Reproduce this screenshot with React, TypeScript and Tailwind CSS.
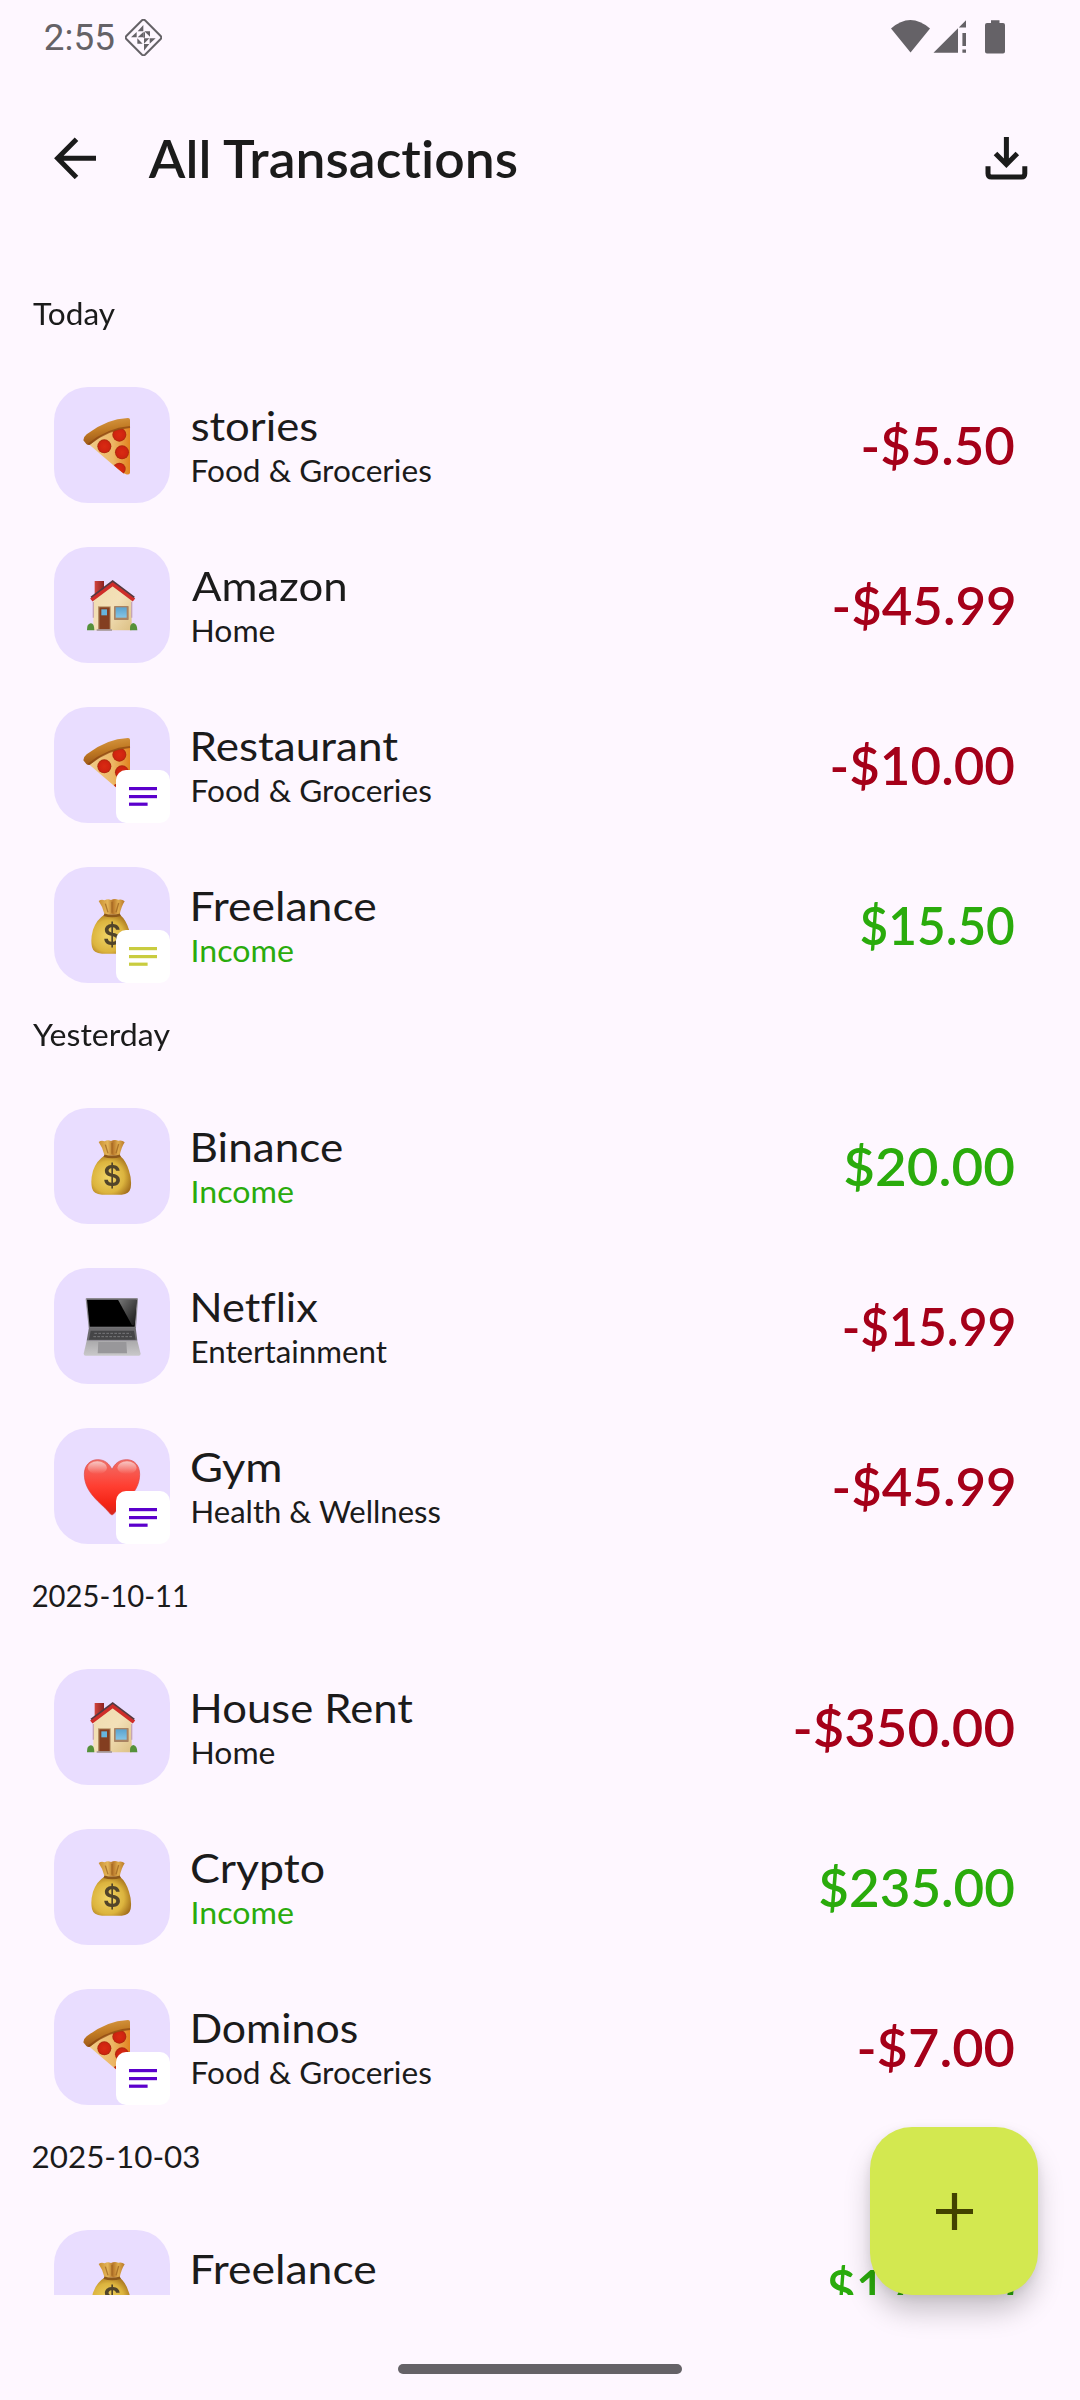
import React from "react";

type Kind = "pizza" | "house" | "bag" | "laptop" | "heart";
type Item = {
  icon: Kind;
  name: string;
  nameW: number;
  category: string;
  amount: string;
  amountW: number;
  note?: boolean;
};
type Group = { label: string; width: number; items: Item[] };

const categoryWidths: Record<string, number> = {
  "Food & Groceries": 238,
  Home: 81.5,
  Income: 100,
  Entertainment: 194,
  "Health & Wellness": 247.5,
};

const groups: Group[] = [
  {
    label: "Today",
    width: 82,
    items: [
      { icon: "pizza", name: "stories", nameW: 125, category: "Food & Groceries", amount: "-$5.50", amountW: 151 },
      { icon: "house", name: "Amazon", nameW: 153, category: "Home", amount: "-$45.99", amountW: 180 },
      { icon: "pizza", name: "Restaurant", nameW: 205, category: "Food & Groceries", amount: "-$10.00", amountW: 182, note: true },
      { icon: "bag", name: "Freelance", nameW: 182.5, category: "Income", amount: "$15.50", amountW: 153, note: true },
    ],
  },
  {
    label: "Yesterday",
    width: 137,
    items: [
      { icon: "bag", name: "Binance", nameW: 149, category: "Income", amount: "$20.00", amountW: 169 },
      { icon: "laptop", name: "Netflix", nameW: 125, category: "Entertainment", amount: "-$15.99", amountW: 170 },
      { icon: "heart", name: "Gym", nameW: 88, category: "Health & Wellness", amount: "-$45.99", amountW: 180, note: true },
    ],
  },
  {
    label: "2025-10-11",
    width: 154,
    items: [
      { icon: "house", name: "House Rent", nameW: 220, category: "Home", amount: "-$350.00", amountW: 219 },
      { icon: "bag", name: "Crypto", nameW: 131.5, category: "Income", amount: "$235.00", amountW: 194 },
      { icon: "pizza", name: "Dominos", nameW: 164, category: "Food & Groceries", amount: "-$7.00", amountW: 155, note: true },
    ],
  },
  {
    label: "2025-10-03",
    width: 166,
    items: [{ icon: "bag", name: "Freelance", nameW: 182.5, category: "Income", amount: "$175.00", amountW: 186 }],
  },
];

const ctx = document.createElement("canvas").getContext("2d")!;
/* A non-zero spacing keeps ligatures out of the measurement. */
(ctx as any).letterSpacing = "0.01px";

/* One line of text whose ink starts at the box's left edge and is stretched to exactly `width` pixels. */
function Fit({
  text,
  width,
  size,
  weight = 400,
  family = "Lato",
  className = "",
}: {
  text: string;
  width: number;
  size: number;
  weight?: number;
  family?: string;
  className?: string;
}) {
  ctx.font = `${weight} ${size * 10}px ${family}, sans-serif`;
  const m = ctx.measureText(text);
  const bearing = m.actualBoundingBoxLeft / 10;
  const ink = bearing + m.actualBoundingBoxRight / 10;
  const scale = width / ink;
  return (
    <div className={`whitespace-nowrap ${className}`} style={{ width }}>
      <span
        className="block origin-left [font-variant-ligatures:none]"
        style={{
          fontFamily: `${family}, sans-serif`,
          fontSize: size,
          fontWeight: weight,
          transform: `translateX(${bearing * scale}px) scaleX(${scale})`,
        }}
      >
        {text}
      </span>
    </div>
  );
}

function Pizza() {
  return (
    <>
      <defs>
        <linearGradient id="cheese" x1="0" x2="1" y1="0" y2="0">
          <stop offset="0" stopColor="#efcd8c" />
          <stop offset="0.6" stopColor="#ecb765" />
          <stop offset="1" stopColor="#e2831f" />
        </linearGradient>
        <linearGradient id="crust" x1="0" x2="0.25" y1="0" y2="1">
          <stop offset="0" stopColor="#dca04a" />
          <stop offset="0.5" stopColor="#c27c25" />
          <stop offset="1" stopColor="#9a5516" />
        </linearGradient>
        <radialGradient id="pepperoni">
          <stop offset="0" stopColor="#d92b12" />
          <stop offset="0.75" stopColor="#cf2310" />
          <stop offset="1" stopColor="#a92a0c" />
        </radialGradient>
        <clipPath id="slice">
          <path d="M100 168 Q160 122 228 112 V262 Q216 268 204 256 Z" />
        </clipPath>
      </defs>
      <path d="M100 168 Q160 122 228 112 V258 Q226 264 216 262 Q200 254 180 236 Z" fill="url(#cheese)" />
      <g clipPath="url(#slice)" fill="url(#pepperoni)">
        <circle cx="196" cy="143" r="21" />
        <circle cx="151" cy="178" r="21" />
        <circle cx="204" cy="196" r="21" />
        <circle cx="196" cy="246" r="19" />
      </g>
      <path d="M88 160 Q88 150 98 142 Q158 95 222 93 Q228 93 228 98 V122 Q160 126 112 170 Q104 178 97 171 Z" fill="url(#crust)" />
      <path d="M104 172 Q160 126 228 120" stroke="#8c4510" strokeWidth="6" fill="none" opacity="0.7" />
    </>
  );
}

function House() {
  return (
    <>
      <defs>
        <linearGradient id="wall" x1="0" x2="1" y1="0" y2="1">
          <stop offset="0" stopColor="#efdcae" />
          <stop offset="0.5" stopColor="#f3e0b8" />
          <stop offset="1" stopColor="#dcc084" />
        </linearGradient>
        <linearGradient id="chimney" x1="0" x2="1">
          <stop offset="0" stopColor="#d2453d" />
          <stop offset="1" stopColor="#8a2220" />
        </linearGradient>
        <linearGradient id="glass" x1="0" x2="0" y1="0" y2="1">
          <stop offset="0" stopColor="#5aa3cf" />
          <stop offset="1" stopColor="#85c5e6" />
        </linearGradient>
      </defs>
      <rect x="122" y="102" width="28" height="48" fill="url(#chimney)" />
      <path d="M118 155 L176 112 L233 155 V250 H118 Z" fill="url(#wall)" />
      <path d="M118 165 V212 M233 165 V212" stroke="#c6a6b4" strokeWidth="4" />
      <path d="M112 159 L176 111 L240 159" stroke="#cf2d29" strokeWidth="12" fill="none" />
      <path d="M111 151 L176 102 L241 151" stroke="#54383f" strokeWidth="5" fill="none" />
      <rect x="132" y="178" width="38" height="71" fill="#b69166" />
      <rect x="136" y="181" width="31" height="66" fill="#833e20" />
      <rect x="142" y="187" width="17" height="18" fill="#66b4dc" />
      <rect x="180" y="177" width="44" height="42" rx="2" fill="#a98362" />
      <rect x="185" y="181" width="33" height="31" fill="url(#glass)" />
      <path d="M128 249 H174" stroke="#a79b9d" strokeWidth="5" />
      <path d="M99 250 Q98 231 110 229 Q121 228 121 250 Z" fill="#55913a" />
      <path d="M228 250 Q226 231 238 228 Q250 231 250 250 Z" fill="#55913a" />
    </>
  );
}

function MoneyBag() {
  return (
    <>
      <defs>
        <radialGradient id="sack" cx="0.42" cy="0.55" r="0.62">
          <stop offset="0" stopColor="#f0d465" />
          <stop offset="0.65" stopColor="#dcb43e" />
          <stop offset="1" stopColor="#a4701c" />
        </radialGradient>
        <linearGradient id="neck" x1="0" x2="1">
          <stop offset="0" stopColor="#c98f32" />
          <stop offset="0.35" stopColor="#e4b558" />
          <stop offset="0.55" stopColor="#b8772a" />
          <stop offset="0.75" stopColor="#dfac4c" />
          <stop offset="1" stopColor="#b9782a" />
        </linearGradient>
      </defs>
      <path d="M134 102 Q142 96 152 100 Q161 94 171 99 Q182 93 193 98 Q205 95 212 103 Q202 118 197 143 H152 Q147 120 134 102 Z" fill="url(#neck)" />
      <path d="M154 110 L162 136 M174 104 V137 M194 108 L186 136" stroke="#955b1b" strokeWidth="4" opacity="0.65" />
      <path d="M151 143 Q128 157 117 188 Q109 217 114 240 Q118 258 144 260 H203 Q226 258 230 240 Q234 215 225 188 Q216 158 198 143 Z" fill="url(#sack)" />
      <path d="M150 143 Q174 151 199 143" stroke="#8c581a" strokeWidth="8" fill="none" />
      <text x="174" y="233" textAnchor="middle" fontFamily="Inter, sans-serif" fontSize="84" fontWeight="600" fill="#51442a">
        $
      </text>
    </>
  );
}

function Laptop() {
  return (
    <>
      <defs>
        <linearGradient id="glare" x1="0" x2="1" y1="0" y2="1">
          <stop offset="0" stopColor="#777" />
          <stop offset="1" stopColor="#151515" />
        </linearGradient>
        <linearGradient id="deck" x1="0" x2="0" y1="0" y2="1">
          <stop offset="0" stopColor="#aaa9ab" />
          <stop offset="1" stopColor="#c9c8ca" />
        </linearGradient>
      </defs>
      <path d="M95 93 Q95 90 99 90 H248 Q252 90 252 93 L246 180 H104 Z" fill="#8d8a90" />
      <path d="M99 95 H248 L242 176 H107 Z" fill="#000" />
      <path d="M192 95 H248 L242 172 H234 Z" fill="url(#glare)" />
      <path d="M105 178 H245 L250 218 H98 Z" fill="#6c6b6e" />
      <path d="M110 188 H240 L245 215 H105 Z" fill="#454547" />
      <path d="M121 196 H230 M118 206 H234" stroke="#77777a" strokeWidth="3" strokeDasharray="8 4" />
      <path d="M98 218 H250 L260 257 Q260 263 254 263 H95 Q89 263 89 257 Z" fill="url(#deck)" />
      <path d="M133 222 H217 L219 256 H131 Z" fill="#98979a" />
    </>
  );
}

function Heart() {
  return (
    <>
      <defs>
        <linearGradient id="heart" x1="0" x2="0" y1="0" y2="1">
          <stop offset="0" stopColor="#ee7068" />
          <stop offset="0.3" stopColor="#fa5147" />
          <stop offset="0.48" stopColor="#ff3e31" />
          <stop offset="0.8" stopColor="#f42416" />
          <stop offset="1" stopColor="#d5251d" />
        </linearGradient>
        <linearGradient id="shine" x1="0" x2="0" y1="0" y2="1">
          <stop offset="0" stopColor="#fff" stopOpacity="0.6" />
          <stop offset="1" stopColor="#fff" stopOpacity="0" />
        </linearGradient>
      </defs>
      <path
        d="M174 261 Q169 259 164 252 C140 224 91 194 91 139 C91 112 108 95 131 95 C151 95 166 106 174 125 C182 106 197 95 218 95 C241 95 257 112 257 139 C257 194 208 224 184 252 Q179 259 174 261 Z"
        fill="url(#heart)"
        stroke="#d94340"
        strokeWidth="2"
      />
      <ellipse cx="130" cy="119" rx="29" ry="19" fill="url(#shine)" />
      <ellipse cx="219" cy="119" rx="29" ry="19" fill="url(#shine)" />
    </>
  );
}

const emoji: Record<Kind, () => React.ReactElement> = {
  pizza: Pizza,
  house: House,
  bag: MoneyBag,
  laptop: Laptop,
  heart: Heart,
};

function NoteBadge({ income }: { income: boolean }) {
  return (
    <div className={`absolute right-0 bottom-0 h-[53px] w-[54px] rounded-[10px] bg-white ${income ? "text-[#c9cc3f]" : "text-[#5b00cc]"}`}>
      <svg viewBox="0 0 54 53" className="size-full" fill="currentColor">
        <rect x="13" y="17" width="28" height="3.2" />
        <rect x="13" y="25" width="28" height="3.2" />
        <rect x="13" y="32.6" width="18.6" height="3.2" />
      </svg>
    </div>
  );
}

function Row({ item }: { item: Item }) {
  const income = item.category === "Income";
  const Icon = emoji[item.icon];
  const roundStart = /^[AGCs]/.test(item.name);
  return (
    <li className="flex h-40 shrink-0 items-center pr-[66px] pl-[54px]">
      <div className="relative size-[116px] shrink-0 rounded-[34px] bg-[#e9ddff]">
        <svg viewBox="0 0 348 348" className="size-full blur-[0.7px]">
          <Icon />
        </svg>
        {item.note && <NoteBadge income={income} />}
      </div>
      <div className="flex-1">
        <Fit
          text={item.name}
          width={item.nameW}
          size={41}
          className={`leading-[50px] text-[#1b1b1b] ${roundStart ? "ml-[22px]" : "ml-[23.3px]"}`}
        />
        <Fit
          text={item.category}
          width={categoryWidths[item.category]}
          size={30.5}
          className={`-mt-px ml-[23.2px] leading-10 ${income ? "text-[#2aab0c]" : "text-[#1b1b1b]"}`}
        />
      </div>
      <Fit
        text={item.amount}
        width={item.amountW}
        size={51}
        weight={600}
        className={`mt-0.5 leading-[60px] ${income ? "text-[#2aab0c]" : "text-[#a50019]"}`}
      />
    </li>
  );
}

function StatusBar() {
  return (
    <div className="flex h-[74px] shrink-0 items-center pl-[44.6px] text-[#656267]">
      <Fit text="2:55" width={68.7} size={37.5} family="Roboto" className="leading-[74px]" />
      <svg viewBox="0 0 111 111" className="mt-px ml-[12.2px] size-[37px]">
        <path
          d="M51 4 Q55.5 0 60 4 L107 51 Q111 55.5 107 60 L60 107 Q55.5 111 51 107 L4 60 Q0 55.5 4 51 Z"
          fill="none"
          stroke="currentColor"
          strokeWidth="6"
        />
        <g fill="currentColor">
          <path d="M55 18 V37 H38 Z M35 39 V55 H18 Z M55 39 V55 H38 Z" />
          <path d="M58 37 H75 V53 Z M74 58 H92 L74 74 Z M57 58 H73 L57 74 Z" />
          <path d="M57 75 H73 L57 95 Z M37 58 V74 H53 Z M55 40 H60 V56 H55 Z" />
        </g>
      </svg>
      <svg viewBox="0 0 116 36" className="ml-[728.5px] h-9 w-[116px] shrink-0" fill="currentColor">
        <path d="M0 9.5 Q19.3 -7.5 39 9.5 L19.5 33.5 Z" />
        <path d="M42.5 33.7 L67 9.2 V33.7 Z M67.8 8.6 L75 1.3 V8.6 Z" />
        <path d="M71.4 14 H75 V27 H71.4 Z M71.4 30.4 H75 V33.7 H71.4 Z" />
        <path d="M100 1.2 H108.5 V4 H112 Q114 4 114 6 V32.5 Q114 34.6 112 34.6 H96 Q94 34.6 94 32.5 V6 Q94 4 96 4 H100 Z" />
      </svg>
    </div>
  );
}

function AppBar() {
  return (
    <header className="flex h-[168px] shrink-0 items-center pr-[52px] pl-[53.6px] text-[#1b1b1b]">
      <svg viewBox="0 0 42 42" className="size-[42px] shrink-0" fill="none" stroke="currentColor" strokeWidth="5">
        <path d="M42 21.3 H4 M22.5 2.2 L3.6 21.3 L22.5 40.4" />
      </svg>
      <Fit text="All Transactions" width={370} size={51} weight={600} className="mt-0.5 ml-[52.5px] leading-[62px]" />
      <svg viewBox="0 0 43 44" className="ml-auto h-11 w-[43px] shrink-0" fill="none" stroke="currentColor" strokeWidth="5">
        <path d="M21.4 1 V28 M10.5 17.4 L21.4 28.5 L32.3 17.4" />
        <path d="M3 30.3 V37.5 Q3 41.1 6.5 41.1 H36.5 Q39.8 41.1 39.8 37.5 V30.3" />
      </svg>
    </header>
  );
}

export default function App() {
  return (
    <div className="relative flex h-[2400px] w-[1080px] flex-col overflow-hidden bg-[#fef7ff]">
      <StatusBar />
      <AppBar />
      <main className="h-[2053px] shrink-0 overflow-hidden pt-[42px]">
        {groups.map((group) => (
          <section key={group.label}>
            <h2 className="h-[81px] pt-[9px] pl-[32.6px] text-[#1b1b1b]">
              <Fit text={group.label} width={group.width} size={30.5} className="leading-10" />
            </h2>
            <ul>
              {group.items.map((item) => (
                <Row key={item.name} item={item} />
              ))}
            </ul>
          </section>
        ))}
      </main>
      <div className="mx-auto mt-[69px] h-[10px] w-[284px] shrink-0 rounded-full bg-[#656267]" />
      <button
        aria-label="Add transaction"
        className="absolute right-[42px] bottom-[105px] flex size-[168px] items-center justify-center rounded-[42px] bg-[#d3e850] shadow-[0_18px_28px_-2px_rgba(0,0,0,0.22),0_2px_10px_rgba(0,0,0,0.07)]"
      >
        <svg viewBox="0 0 38 38" className="size-[38px] text-[#424200]" stroke="currentColor" strokeWidth="5.2">
          <path d="M19.5 1 V38 M1 19.5 H38" />
        </svg>
      </button>
    </div>
  );
}
